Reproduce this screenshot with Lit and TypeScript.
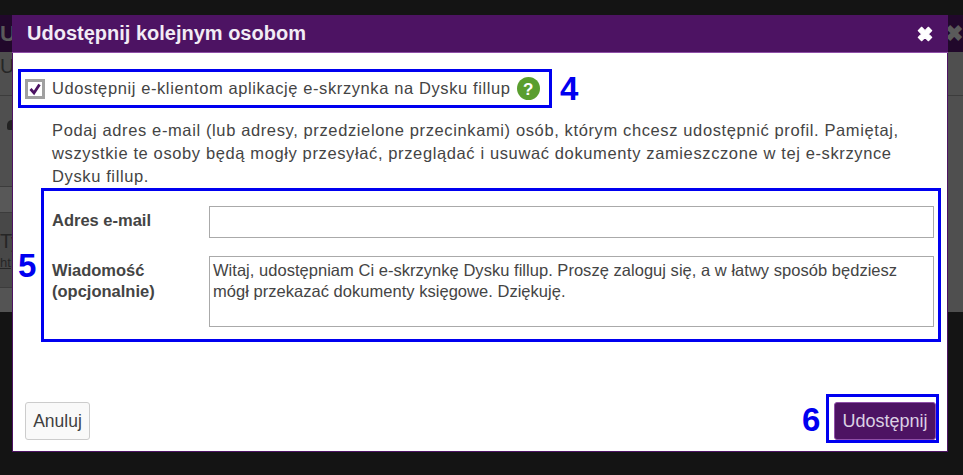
import { LitElement, html, css } from "lit";
import { customElement } from "lit/decorators.js";

@customElement("app-root")
export class AppRoot extends LitElement {
  static styles = css`
    :host { display: block; width: 963px; height: 475px; position: relative; overflow: hidden; background: #141414; font-family: "Liberation Sans", Arial, sans-serif; color: #444; font-size: 17px; }
    .bg { height: 475px; display: flex; flex-direction: column; }
    .bg-top { height: 15px; background: #141414; }
    .bg-head { height: 37px; background: #21082b; color: #5a5a5a; font-size: 22px; font-weight: 700; display: flex; justify-content: space-between; line-height: 37px; }
    .bg-main { height: 260px; background: #4f4f4f; display: flex; flex-direction: column; }
    .bg-row { width: 12px; box-sizing: border-box; border-bottom: 1px solid #3c3c3c; white-space: nowrap; overflow: hidden; color: #262626; font-size: 20px; }
    .r1 { width: 100%; height: 44px; line-height: 28px; }
    .r2 { height: 91px; padding-top: 24px; }
    .blot { display: block; width: 6px; height: 10px; margin-left: 7px; border-radius: 5px 0 0 2px; background: #222; }
    .r3 { height: 26px; background: #585858; }
    .r4 { height: 75px; line-height: 24px; padding-top: 16px; background: #484848; }
    .small { display: block; font-size: 13px; line-height: 14px; margin-top: 3px; text-decoration: underline; }
    .r5 { height: 24px; background: #545454; border: 0; }
    .modal { position: absolute; left: 12px; top: 15px; width: 936px; height: 437px; background: #fff; box-sizing: border-box; border: 1px solid #4d1363; border-top: 0; display: flex; flex-direction: column; }
    .head { height: 38px; flex: none; box-sizing: border-box; background: #4d1363; border-bottom: 1px solid #8f4fa8; margin: 0 -1px; padding: 0 14px 0 15px; display: flex; align-items: center; justify-content: space-between; color: #f2ecf5; font-size: 20px; font-weight: 700; }
    .close { width: 18px; height: 18px; display: block; }
    .body { flex: 1; padding: 16px 0 0 5px; display: flex; flex-direction: column; }
    .check { display: flex; align-items: center; height: 39px; width: 534px; box-sizing: border-box; padding: 0 0 0 4px; border: 3px solid #0000f0; font-size: 16.5px; letter-spacing: 0.6px; }
    .box { width: 20px; height: 20px; box-sizing: border-box; border: 3px solid #a0a0a0; display: flex; margin-right: 7px; flex: none; }
    .help { width: 23px; height: 23px; margin-left: 7px; flex: none; }
    .desc { margin: 11px 0 0 34px; line-height: 23px; width: 880px; font-size: 16.5px; letter-spacing: 0.62px; }
    .fields { margin: 0 0 0 23px; height: 154px; width: 900px; box-sizing: border-box; border: 3px solid #0000f0; padding: 15px 4px 0 8px; display: grid; grid-template-columns: 157px 1fr; grid-template-rows: 32px 71px; row-gap: 18px; }
    .label { font-weight: 700; line-height: 21px; font-size: 16.5px; }
    .l1 { padding-top: 4px; }
    .l2 { padding-top: 4px; }
    .input { border: 1px solid #aaa; box-sizing: border-box; }
    .msg { padding: 3px 2px 3px 3px; line-height: 21px; font-size: 16.5px; letter-spacing: 0.03px; }
    .foot { margin-top: auto; display: flex; justify-content: space-between; align-items: flex-end; padding: 0 8px 8px 7px; }
    .btn { height: 38px; box-sizing: border-box; border: 1px solid #ccc; border-radius: 3px; background: #f9f9f9; display: flex; align-items: center; justify-content: center; font-size: 17.5px; color: #3f3f3f; }
    .cancel { width: 65px; margin-bottom: 3px; }
    .primary { background: #4d1363; border-color: #8f4fa8; color: #dcd0e3; font-size: 18px; width: 102px; flex: none; }
    .mark { border: 3px solid #0000f0; padding: 5px 0 0 5px; box-sizing: border-box; height: 49px; width: 113px; display: flex; }
    .n { position: absolute; color: #0000f0; font-size: 33px; font-weight: 700; line-height: 36px; }
    .n4 { left: 560px; top: 71px; } .n5 { left: 18px; top: 248px; } .n6 { left: 802px; top: 402px; }
  `;
  render() {
    return html`
      <div class="bg">
        <div class="bg-top"></div>
        <div class="bg-head"><span>U</span><span>✖</span></div>
        <div class="bg-main">
          <div class="bg-row r1">Uż</div>
          <div class="bg-row r2"><span class="blot"></span></div>
          <div class="bg-row r3"></div>
          <div class="bg-row r4">Ty<span class="small">ht</span></div>
          <div class="bg-row r5"></div>
        </div>
      </div>
      <div class="modal">
        <div class="head"><span>Udostępnij kolejnym osobom</span>
          <svg class="close" viewBox="0 0 16 16"><path d="M2 5 5 2l3 3 3-3 3 3-3 3 3 3-3 3-3-3-3 3-3-3 3-3z" fill="#fff" stroke="#fff" stroke-linejoin="round"/></svg>
        </div>
        <div class="body">
          <div class="check">
            <span class="box"><svg viewBox="0 0 14 14" width="14" height="14"><path d="M2.5 7 6 11 11.5 2.5" fill="none" stroke="#4d1363" stroke-width="2.8"/></svg></span>
            <span>Udostępnij e-klientom aplikację e-skrzynka na Dysku fillup</span>
            <svg class="help" viewBox="0 0 23 23"><circle cx="11.5" cy="11.5" r="11.5" fill="#5a9e2f"/><text x="11.5" y="17.5" text-anchor="middle" font-family="Liberation Sans" font-weight="700" font-size="17" fill="#fff">?</text></svg>
          </div>
          <div class="desc">Podaj adres e-mail (lub adresy, przedzielone przecinkami) osób, którym chcesz udostępnić profil. Pamiętaj, wszystkie te osoby będą mogły przesyłać, przeglądać i usuwać dokumenty zamieszczone w tej e-skrzynce Dysku fillup.</div>
          <div class="fields">
            <div class="label l1">Adres e-mail</div><div class="input"></div>
            <div class="label l2">Wiadomość<br>(opcjonalnie)</div>
            <div class="input msg">Witaj, udostępniam Ci e-skrzynkę Dysku fillup. Proszę zaloguj się, a w łatwy sposób będziesz mógł przekazać dokumenty księgowe. Dziękuję.</div>
          </div>
          <div class="foot"><div class="btn cancel">Anuluj</div><div class="mark"><div class="btn primary">Udostępnij</div></div></div>
        </div>
      </div>
      <span class="n n4">4</span><span class="n n5">5</span><span class="n n6">6</span>
    `;
  }
}
